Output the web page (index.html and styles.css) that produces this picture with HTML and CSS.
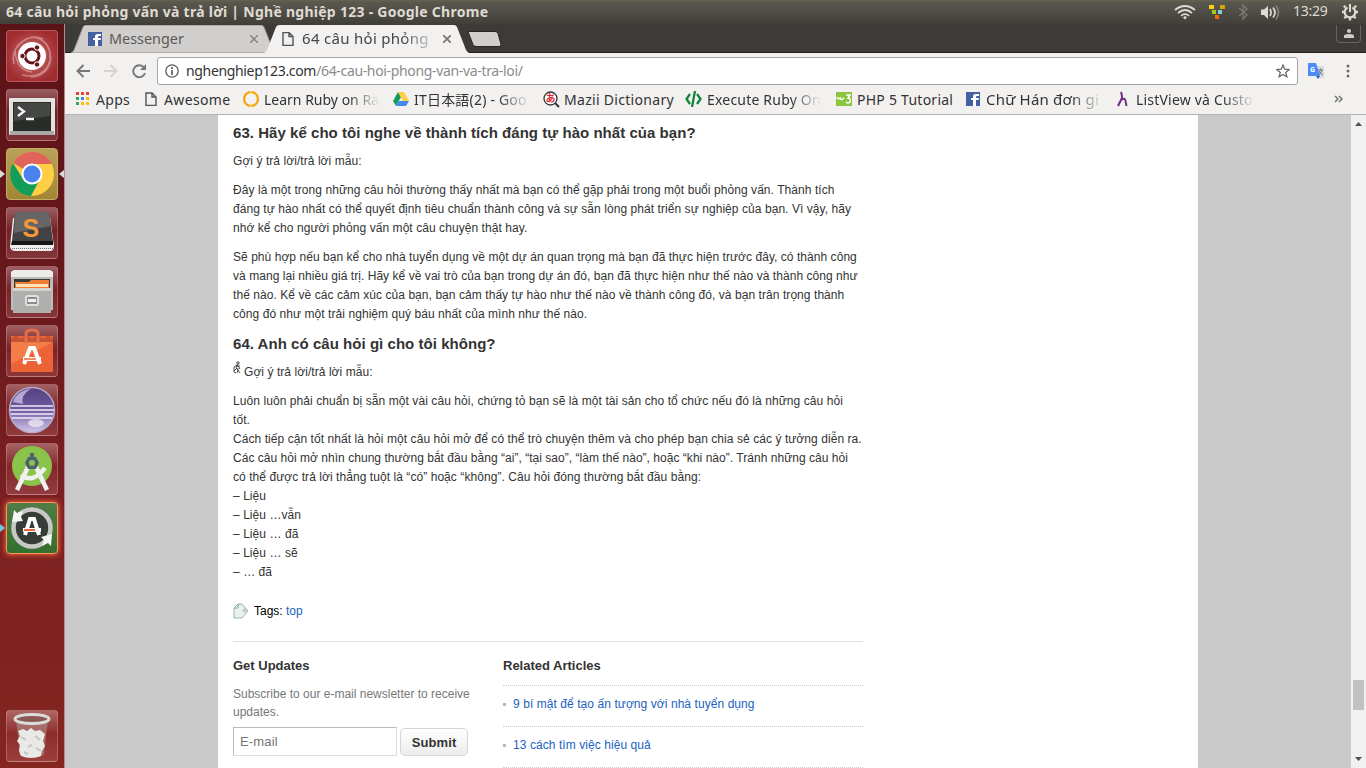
FILE: index.html
```html
<!DOCTYPE html>
<html lang="vi">
<head>
<meta charset="utf-8">
<title>64 câu hỏi phỏng vấn và trả lời | Nghề nghiệp 123</title>
<link rel="stylesheet" href="styles.css">
</head>
<body>
<div class="panel">
  <div class="panel-title">64 câu hỏi phỏng vấn và trả lời | Nghề nghiệp 123 - Google Chrome</div>
  <div class="indicators">
    <svg width="22" height="18" viewBox="0 0 22 18" fill="none" stroke="#dfdbd2" stroke-width="1.7"><path d="M1 7Q11-1 21 7M4 10Q11 4 18 10M7 12.800Q11 9.500 15 12.800"/><path d="M9 14.500l2-1.500 2 1.500-2 2z" fill="#dfdbd2" stroke="none"/></svg>
    <svg class="ind-blocks" width="17" height="18" viewBox="0 0 17 18"><path fill="#fcd116" d="M0 2h5v4H0z"/><path fill="#d4a500" d="M11 2h5v4h-5z"/><path fill="#a3cf10" d="M3 7h4v4H3z"/><path fill="#83c9de" d="M9 7h4v4H9z"/><path fill="#ff6200" d="M6 12h4v4H6z"/></svg>
    <svg class="ind-bt" width="10" height="18" viewBox="0 0 10 18" fill="none" stroke="#7c7a73" stroke-width="1.300"><path d="M1 5l8 7-4 4V2l4 4-8 7"/></svg>
    <svg class="ind-sound" width="21" height="18" viewBox="0 0 21 18"><path d="M1 6.500h3l4-3.500v13l-4-4H1z" fill="#dfdbd2"/><g fill="none" stroke="#dfdbd2" stroke-width="1.700"><path d="M10 6q2 4 0 7M13 4.500q4 5 0 10"/><path stroke="#817f78" d="M16 2.500q5 7 0 14"/></g></svg>
    <span class="clock">13:29</span>
    <svg class="ind-gear" width="18" height="18" viewBox="0 0 18 18" fill="none" stroke="#dfdbd2"><path stroke-width="2.200" d="M6.500 4.500A5.300 5.300 0 1 0 11.500 4.500"/><path stroke-width="2" d="M9 1v8"/><path stroke-width="2.300" d="M4.500 4.500L2.800 2.800M13.500 4.500l1.700-1.700M3.500 9H1M14.500 9H17M5 13.500l-1.700 1.700M13 13.500l1.700 1.700M9 15v2.500"/></svg>
  </div>
</div>
<div class="desktop">
  <nav class="launcher">
    <div class="tile tile-dash"><svg viewBox="0 0 52 52"><path d="M7 30C7 14 22 4 34 9q11 6 10 19M12 16Q24 3 37 9M44 24c3 14-8 23-19 23M26 42Q10 40 9 20M16 45q24 5 29-18M8 34q-3-12 6-20" fill="none" stroke="#f3c0c0" opacity=".5" stroke-width="1.500"/><circle cx="26" cy="26" r="14" fill="#fff"/><circle cx="26" cy="26" r="7" fill="none" stroke="#641418" stroke-width="3"/><g fill="#641418" stroke="#fff" stroke-width="1"><circle cx="16.500" cy="26" r="2.700"/><circle cx="31" cy="17.500" r="2.700"/><circle cx="31" cy="34.500" r="2.700"/></g></svg></div>
    <div class="tile"><svg viewBox="0 0 52 52"><rect x="3" y="9" width="46" height="37" rx="1" fill="#e3e3df"/><rect x="4" y="42" width="44" height="4" fill="#a9aaa6"/><rect x="7" y="13" width="38" height="29" fill="#292c29"/><path d="M8 14h36v13L8 32z" fill="#454745"/><path d="M12 18l6 4.500-6 4.500M20 30h8" fill="none" stroke="#f4f4f4" stroke-width="2.300"/></svg></div>
    <div class="tile tile-chrome running"><svg viewBox="0 0 52 52"><circle cx="26" cy="26" r="22" fill="#ffce43"/><path d="M26 26L7 15A22 22 0 0 1 46 16H26z" fill="#e0645c"/><path d="M7 15A22 22 0 0 0 25 48l9-17-8 5-9-5z" fill="#149c59"/><circle cx="26" cy="26" r="10.500" fill="#fff"/><circle cx="26" cy="26" r="8.500" fill="#4a83ed"/></svg></div>
    <div class="tile"><svg viewBox="0 0 52 52"><path d="M7 11L4 39q0 4 4 5h37q3-1 3-5L44 10z" fill="#eee"/><path d="M9 5h34l4 29H6z" fill="#424242"/><path d="M9 5h34l2 14-37 7z" fill="#666"/><path d="M6 34h41v4H5z" fill="#161616"/><path d="M6 41.500h41" stroke="#777" stroke-dasharray="1 1"/><text x="16.500" y="29.500" class="sublime">S</text></svg></div>
    <div class="tile"><svg viewBox="0 0 52 52"><path d="M5 6l3-2h36l3 2v38H5z" fill="#bdbdbb"/><path d="M5 6l3-2h36l3 2v5H5z" fill="#ececea"/><path d="M8 13h36v10H8z" fill="#393936"/><path d="M9 16h14l2-2h18v8H9z" fill="#f07d32"/><path d="M10 18h32v3H10z" fill="#ffe2b5"/><path d="M7 22h38v25H7z" fill="#aeb0ae"/><path d="M7 22h38v3H7z" fill="#d4d5d3"/><rect x="20" y="30" width="12" height="9" rx="1.500" fill="#8c8e8c" stroke="#e0e0df" stroke-width="2"/><path d="M22 33h8v3h-8z" fill="#eee"/></svg></div>
    <div class="tile"><svg viewBox="0 0 52 52"><path d="M5 11h42v36H5z" fill="#ed6336"/><path d="M5 14l5-4 5 4 5-4 6 4 6-4 5 4 5-4 5 4v4H5z" fill="#c65335"/><path d="M5 17h42L5 39z" fill="#f47d48"/><path d="M20 18V9q0-4 6-4t6 4v9" fill="none" stroke="#de6d48" stroke-width="3"/><path d="M18 39l6-16h4l6 16M17 34h18" fill="none" stroke="#fff" stroke-width="4"/><path d="M18 34h12" stroke="#ed6336" stroke-width="1.500"/></svg></div>
    <div class="tile"><svg viewBox="0 0 52 52"><defs><linearGradient id="eclipse-body" x2="0" y2="1"><stop stop-color="#524181"/><stop offset=".5" stop-color="#705b9f"/><stop offset="1" stop-color="#d3c8ea"/></linearGradient></defs><circle cx="26" cy="26" r="22.500" fill="url(#eclipse-body)" stroke="#b5abca" stroke-width="1.500"/><path d="M7 18a20 17 0 0 1 18-13Q14 11 17 20z" fill="#b5a8d5"/><path d="M5 22h42M4 26h44M5 30h42M6 34h40" stroke="#eeeaf6" stroke-width="1.300"/><ellipse cx="30" cy="39" rx="8" ry="4" fill="#fff" opacity=".6"/></svg></div>
    <div class="tile"><svg viewBox="0 0 52 52"><circle cx="26" cy="23" r="20" fill="#8ac34a"/><path d="M15 32q12 9 24-7M22 24L11 47M30 24l11 23" fill="none" stroke="#f0f0f0" stroke-width="4.500"/><path d="M22 14h8l3 6-3 6h-8l-3-6z" fill="#52606b"/><path d="M24 10h4v8h-4z" fill="#52606b"/><circle cx="26" cy="20" r="3" fill="#8ac34a"/></svg></div>
    <div class="tile tile-updater attention"><svg viewBox="0 0 52 52"><circle cx="26" cy="26" r="18.500" fill="#363c37" stroke="#c8c9c6" stroke-width="4.500"/><path d="M6 20l2-12 3 3 6-2-2 6 2 4zM46 32l-1 12-3-3-6 3 2-6-3-3z" fill="#f6f6f4"/><path d="M19 33l5-16h4l5 16M17 28h18" fill="none" stroke="#fff" stroke-width="4"/><path d="M18 28h11" stroke="#e95420" stroke-width="1.800"/></svg></div>
    <div class="tile tile-trash"><svg viewBox="0 0 52 52"><path d="M10 9l4 36q12 5 24 0l4-36z" fill="#b7a8a5" opacity=".45"/><path d="M12 21l5-2 4 2 4-3 4 3 5-1 5 4-2 7 2 5-3 5-1 5q-10 4-20 0l-2-5 1-6-3-4 3-5z" fill="#e9e9e7"/><path d="M15 27l5 3M22 37l4-2M29 26l5 4M30 38l5 3M18 42l4 2" fill="none" stroke="#c5c6c4" stroke-width="2"/><ellipse cx="26" cy="9" rx="17" ry="4.500" fill="#8a5754" stroke="#d9dbd9" stroke-width="3"/></svg></div>
  </nav>
  <main class="browser">
    <header class="tabstrip">
      <div class="tab"><svg class="tab-shape" width="207" height="28" viewBox="0 0 207 28"><path d="M0 28Q2 27 3 25L12 2q1-2 3-2h175q2 0 3 2l9 23q1 2 3 3z" fill="#d1cfce" stroke="#92908e" stroke-width="1"/></svg><svg class="favicon" width="14" height="14" viewBox="0 0 14 14"><path fill="#4460a0" d="M0 0h14v14H0z"/><path d="M7 14V8H5V6h2V4.500Q7 2 9.500 2H13v2h-2q-1 0-1 1v1h3l-.4 2H10v6z" fill="#fff"/></svg><span class="tab-title">Messenger</span><svg class="tab-close" width="8" height="8"><path d="M0 0l8 8M8 0L0 8" stroke="#858381" stroke-width="1.500"/></svg></div>
      <div class="tab tab-active"><svg class="tab-shape" width="207" height="28" viewBox="0 0 207 28"><path d="M0 28Q2 27 3 25L12 2q1-2 3-2h175q2 0 3 2l9 23q1 2 3 3z" fill="#f2f1f0"/></svg><svg class="favicon" width="14" height="14" viewBox="0 0 14 14"><path d="M2 .5h6l4 4v9H2zM8 .5v4h4" fill="none" stroke="#555" stroke-width="1.400"/></svg><span class="tab-title active-title">64 câu hỏi phỏng</span><svg class="tab-close" width="8" height="8"><path d="M0 0l8 8M8 0L0 8" stroke="#777573" stroke-width="1.700"/></svg></div>
      <svg class="new-tab" width="34" height="16"><path d="M1 .5h26q2 0 3 2l3 11q0 2-2 2H8q-2 0-3-2L.5 2Q0 .5 1 .5z" fill="#d1cfce" stroke="#262521"/></svg>
      <div class="user-button"><svg width="10" height="9" viewBox="0 0 10 9"><circle cx="5" cy="2" r="2" fill="#d0ceca"/><path d="M0 9V7q0-2 5-2t5 2v2z" fill="#d0ceca"/></svg></div>
    </header>
    <div class="toolbar">
      <svg class="nav-icon" width="14" height="14" viewBox="0 0 14 14" fill="none" stroke="#777" stroke-width="2"><path d="M14 7H1.500M7.500 1l-6 6 6 6"/></svg>
      <svg class="nav-icon" width="14" height="14" viewBox="0 0 14 14" fill="none" stroke="#d5d4d3" stroke-width="2"><path d="M0 7h12.500M6.500 1l6 6-6 6"/></svg>
      <svg class="nav-icon" width="14" height="14" viewBox="0 0 14 14"><path d="M12 3.500A6 6 0 1 0 13 9" fill="none" stroke="#777" stroke-width="1.900"/><path d="M14 0v6H8z" fill="#777"/></svg>
      <div class="omnibox"><svg width="14" height="14" viewBox="0 0 14 14" fill="none" stroke="#5b5b5b"><circle cx="7" cy="7" r="6.200" stroke-width="1.300"/><path stroke-width="1.700" d="M7 6v5M7 3v2"/></svg><span class="url"><span class="domain">nghenghiep123.com</span>/64-cau-hoi-phong-van-va-tra-loi/</span><svg class="star" width="14" height="14" viewBox="0 0 14 14"><path d="M7 1l1.700 4.200 4.500.3-3.500 2.900 1.200 4.400L7 10.400l-3.900 2.400 1.200-4.400L.8 5.500l4.500-.3z" fill="none" stroke="#6b6b6b" stroke-width="1.300"/></svg></div>
      <svg class="translate" width="17" height="16" viewBox="0 0 17 16"><path d="M6 3h10v12H9z" fill="#d9dcdf"/><path d="M8 13h4l-2 3z" fill="#3355c8"/><path d="M0 0h8l4 13H0z" fill="#4c8bf5"/><text x="2" y="9" class="translate-g">G</text><path d="M10 7h5M12.500 5.500V7M14 7q-1 4-4 5M11 8q1 3 4 4" fill="none" stroke="#667987"/></svg>
      <svg class="menu-dots" width="4" height="14" viewBox="0 0 4 14" fill="#6c6b69"><circle cx="2" cy="2" r="1.500"/><circle cx="2" cy="7" r="1.500"/><circle cx="2" cy="12" r="1.500"/></svg>
    </div>
    <div class="bookmarks">
      <div class="bookmark b-apps"><svg width="14" height="14"><path fill="#ea4335" d="M0 0h3v3H0zM5 0h3v3H5zM10 0h3v3h-3z"/><path fill="#34a853" d="M0 5h3v3H0zM0 10h3v3H0z"/><path fill="#4285f4" d="M5 5h3v3H5z"/><path fill="#fbbc05" d="M10 5h3v3h-3zM5 10h3v3H5zM10 10h3v3h-3z"/></svg><span>Apps</span></div>
      <div class="bookmark b-awesome"><svg width="12" height="14"><path d="M1 1h6l4 4v8.500H1zM7 1v4h4" fill="none" stroke="#555" stroke-width="1.400"/></svg><span>Awesome</span></div>
      <div class="bookmark b-ruby"><svg width="16" height="16" viewBox="0 0 16 16" fill="none" stroke="#f6a609" stroke-width="2.300"><path d="M7.500 1C-1 2-1 14 7.500 15M8.500 1c8.500 1 8.500 13 0 14"/></svg><span class="fade">Learn Ruby on Ra</span></div>
      <div class="bookmark b-it"><svg width="16" height="14"><path fill="#149c59" d="M5 0L0 9l3 5 5-9z"/><path fill="#ffcf40" d="M5 0h6l5 9h-6z"/><path fill="#4387f5" d="M6 9h10l-3 5H3z"/></svg><span class="fade">IT日本語(2) - Goo</span></div>
      <div class="bookmark b-mazii"><svg width="17" height="17" viewBox="0 0 17 17"><circle cx="7.500" cy="7.500" r="6.500" fill="#fff" stroke="#333" stroke-width="1.300"/><path d="M12 12l4 4" stroke="#333" stroke-width="2"/><text x="2.500" y="11" class="kana">あ</text></svg><span>Mazii Dictionary</span></div>
      <div class="bookmark b-exec"><svg width="17" height="16" viewBox="0 0 17 16" fill="none" stroke="#15843b" stroke-width="2.300"><path d="M5 3L1.500 8 5 13M12 3l3.500 5L12 13M10 0L7 16"/></svg><span class="fade">Execute Ruby On</span></div>
      <div class="bookmark b-php"><svg width="16" height="14" viewBox="0 0 16 14"><path fill="#8ac53e" d="M0 0h16v14H0z"/><path d="M1 5q1 3 3 1 1 3 4 0M10 3h4l-2 3q3 0 2 4-2 2-4 0" fill="none" stroke="#fff" stroke-width="1.500"/></svg><span>PHP 5 Tutorial</span></div>
      <div class="bookmark b-kanji"><svg width="14" height="14" viewBox="0 0 14 14"><path fill="#4460a0" d="M0 0h14v14H0z"/><path d="M7 14V8H5V6h2V4.500Q7 2 9.500 2H13v2h-2q-1 0-1 1v1h3l-.4 2H10v6z" fill="#fff"/></svg><span class="fade">Chữ Hán đơn gi</span></div>
      <div class="bookmark b-list"><svg width="11" height="16" viewBox="0 0 11 16" fill="none" stroke="#6c2e80"><path stroke-width="2" d="M4 1q1 2 1 6l-4 8"/><path stroke-width="1.900" d="M4 9q4-3 4.500 1l1 5"/></svg><span class="fade">ListView và Custo</span></div>
      <svg class="overflow" width="9" height="8" fill="none" stroke="#6b6a68" stroke-width="1.400"><path d="M1 1l3 3-3 3M5 1l3 3-3 3"/></svg>
    </div>
    <div class="viewport">
      <div class="page">
        <article class="content">
          <h3 class="question q63">63. Hãy kể cho tôi nghe về thành tích đáng tự hào nhất của bạn?</h3>
          <p>Gợi ý trả lời/trả lời mẫu:</p>
          <p>Đây là một trong những câu hỏi thường thấy nhất mà bạn có thể gặp phải trong một buổi phỏng vấn. Thành tích<br>đáng tự hào nhất có thể quyết định tiêu chuẩn thành công và sự sẵn lòng phát triển sự nghiệp của bạn. Vì vậy, hãy<br>nhớ kể cho người phỏng vấn một câu chuyện thật hay.</p>
          <p><span class="snug">Sẽ phù hợp nếu bạn kể cho nhà tuyển dụng về một dự án quan trọng mà bạn đã thực hiện trước đây, có thành công<br>và mang lại nhiều giá trị. Hãy kể về vai trò của bạn trong dự án đó, bạn đã thực hiện như thế nào và thành công như</span><br>thế nào. Kể về các cảm xúc của bạn, bạn cảm thấy tự hào như thế nào về thành công đó, và bạn trân trọng thành<br>công đó như một trải nghiệm quý báu nhất của mình như thế nào.</p>
          <h3 class="question">64. Anh có câu hỏi gì cho tôi không?</h3>
          <p><svg class="figure" width="8" height="14" viewBox="0 0 8 14" fill="none" stroke="#222" stroke-width=".8"><circle cx="5" cy="2" r="1.200"/><path d="M5 3L3 7l2 2-1 3M4 4L1 6v5l2 1M5 5l2 3M4 7l-3 3M5 9l2 3M3 5h4M4 8h2"/></svg>Gợi ý trả lời/trả lời mẫu:</p>
          <p><span class="loose">Luôn luôn phải chuẩn bị sẵn một vài câu hỏi, chứng tỏ bạn sẽ là một tài sản cho tổ chức nếu đó là những câu hỏi</span><br>tốt.<br>Cách tiếp cận tốt nhất là hỏi một câu hỏi mở để có thể trò chuyện thêm và cho phép bạn chia sẻ các ý tưởng diễn ra.<br><span class="tight">Các câu hỏi mở nhìn chung thường bắt đầu bằng “ai”, “tại sao”, “làm thế nào”, hoặc “khi nào”. Tránh những câu hỏi</span><br>có thể được trả lời thẳng tuột là “có” hoặc “không”. Câu hỏi đóng thường bắt đầu bằng:<br>– Liệu<br>– Liệu …vẫn<br>– Liệu … đã<br>– Liệu … sẽ<br>– … đã</p>
          <div class="tags"><svg width="16" height="16" viewBox="0 0 16 16"><path d="M1 5V15h8l6-7-6-7H5v3z" fill="#e7f1ef" stroke="#9ab1ae"/><path d="M1 5l4-4v4z" fill="#fff" stroke="#8ba5a2"/><circle cx="11.500" cy="7.500" r="1.200" fill="#fff" stroke="#8ba5a2"/></svg><span>Tags: <a>top</a></span></div>
          <section class="after-post">
            <div class="updates">
              <h4>Get Updates</h4>
              <p class="subscribe">Subscribe to our e-mail newsletter to receive<br>updates.</p>
              <form class="signup"><input type="text" placeholder="E-mail"><button type="button">Submit</button></form>
            </div>
            <div class="related">
              <h4>Related Articles</h4>
              <ul><li><a>9 bí mật để tạo ấn tượng với nhà tuyển dụng</a></li><li><a>13 cách tìm việc hiệu quả</a></li></ul>
            </div>
          </section>
        </article>
      </div>
      <div class="scrollbar"><svg width="7" height="4"><path d="M0 4l3.500-4L7 4z" fill="#505050"/></svg><div class="thumb"></div><svg width="7" height="4"><path d="M0 0l3.500 4L7 0z" fill="#505050"/></svg></div>
    </div>
  </main>
</div>
</body>
</html>
```
FILE: styles.css
```css
* { box-sizing: border-box; }
body { margin: 0; width: 1366px; height: 768px; overflow: hidden; font-family: "Noto Sans", "Noto Sans CJK JP", sans-serif; }
svg { flex: none; display: block; }
.panel { height: 24px; display: flex; align-items: center; justify-content: space-between; padding: 0 7px 0 6px; background: linear-gradient(#66634f 0, #5b5850 2px, #403f3a); color: #dfdbd2; }
.panel-title { font-weight: 700; font-size: 14px; white-space: nowrap; letter-spacing: .27px; line-height: 24px; }
.indicators { display: flex; align-items: center; }
.ind-blocks { margin-left: 13px; }
.ind-bt { margin-left: 12px; }
.ind-sound { margin-left: 12px; }
.clock { margin-left: 12px; width: 36px; font-size: 14px; line-height: 20px; padding-bottom: 2px; letter-spacing: -.25px; white-space: nowrap; }
.ind-gear { margin-left: 12px; }
.desktop { display: flex; height: 744px; }
.launcher { width: 65px; flex: none; display: flex; flex-direction: column; align-items: flex-start; gap: 7px; padding: 6px 0 6px 6px; border-right: 1px solid #bd8588; background: linear-gradient(#5c1317, #66171b 30%, #7b2022 65%, #84251f); }
.tile { position: relative; width: 52px; height: 52px; flex: none; border-radius: 4px; border: 1px solid rgba(255,220,220,.24); background: linear-gradient(rgba(255,225,230,.35), rgba(190,80,90,.18) 45%, rgba(225,150,155,.24)); }
.tile svg { width: 52px; height: 52px; margin: -1px; }
.tile-dash { background: radial-gradient(#cb7577, #a12d31 75%); }
.tile-chrome { background: linear-gradient(#bba158, #a38634); border-color: #c6ad67; }
.tile-updater { background: linear-gradient(#517c46, #34702e); }
.tile-trash { margin-top: auto; }
.running::before, .running::after, .attention::before { content: ""; position: absolute; top: 21px; border: 4px solid transparent; }
.running::before { left: -7px; border-left: 5px solid #ddd; border-right: 0; }
.running::after { right: -7px; border-right: 5px solid #ddd; border-left: 0; }
.attention { border-color: #fa9860; box-shadow: 0 0 5px 1px #ed6038; }
.attention::before { left: -7px; border-left: 5px solid #70c6e5; border-right: 0; }
.sublime { font: bold 25px "Liberation Sans", sans-serif; fill: #f3983a; }
.browser { flex: 1; min-width: 0; display: flex; flex-direction: column; background: #f2f1f0; }
.tabstrip { height: 29px; display: flex; align-items: flex-start; padding: 1px 5px 0 6px; background: #3c3b37; border-bottom: 1px solid #24231f; }
.tab { position: relative; width: 205px; height: 28px; margin-right: -12px; padding: 0 12px 0 17px; display: flex; align-items: center; color: #5b5957; }
.tab > *:not(.tab-shape) { position: relative; }
.tab-shape { position: absolute; left: 0; top: 0; }
.tab-title { margin-left: 7px; width: 130px; padding-bottom: 2px; font-size: 14.4px; white-space: nowrap; overflow: hidden; }
.tab-close { margin-left: auto; margin-right: 6px; }
.tab-active { z-index: 1; color: #454545; margin-right: -1px; }
.active-title { font-size: 15px; letter-spacing: .3px; -webkit-mask-image: linear-gradient(90deg, #000 100px, transparent 137px); }
.new-tab { margin-top: 6px; }
.user-button { margin-left: auto; width: 25px; height: 18px; display: flex; align-items: center; justify-content: center; border: 1px solid #65635d; border-top: 0; border-radius: 0 0 4px 4px; }
.toolbar { height: 33px; display: flex; align-items: center; padding: 4px 16px 1px 11px; }
.nav-icon { margin-right: 14px; }
.omnibox { width: 1141px; height: 28px; margin-left: -3px; display: flex; align-items: center; padding: 0 7px; background: #fff; border: 1px solid #a5a5a5; border-radius: 3px; }
.url { margin-left: 7px; padding-bottom: 2px; font-size: 14px; letter-spacing: -.34px; color: #8b8b8b; white-space: nowrap; }
.domain { color: #333; }
.star { margin-left: auto; }
.translate { margin-left: 10px; }
.translate-g { font: bold 7px "Open Sans", sans-serif; fill: #fff; }
.menu-dots { margin-left: auto; }
.bookmarks { height: 29px; display: flex; align-items: center; padding: 0 23px 2px 11px; border-bottom: 1px solid #b6b4b2; color: #333; font-size: 14px; }
.bookmark { display: flex; align-items: center; gap: 7px; white-space: nowrap; flex: none; overflow: hidden; }
.bookmark span { overflow: hidden; }
.fade { flex: 1; -webkit-mask-image: linear-gradient(90deg, #000 calc(100% - 32px), transparent); }
.b-apps { width: 69px; gap: 6px; letter-spacing: .3px; }
.b-awesome { width: 98px; letter-spacing: .35px; }
.b-ruby { width: 137px; margin-right: 13px; gap: 5px; }
.b-it { width: 137px; margin-right: 13px; gap: 5px; letter-spacing: .2px; }
.b-mazii { width: 142px; gap: 4px; letter-spacing: .3px; }
.b-exec { width: 137px; margin-right: 14px; gap: 5px; letter-spacing: .2px; }
.b-php { width: 130px; gap: 5px; letter-spacing: .25px; }
.b-kanji { width: 137px; margin-right: 14px; gap: 6px; font-size: 15px; letter-spacing: .2px; }
.b-list { width: 138px; gap: 8px; letter-spacing: .2px; }
.kana { font: bold 10px "Noto Sans CJK JP", sans-serif; fill: #d82c39; }
.overflow { margin-left: auto; }
.viewport { flex: 1; min-height: 0; display: flex; background: #c9c9c9; }
.page { width: 980px; margin-left: 153px; padding: 6px 15px 0; overflow: hidden; background: #fff; }
.content { width: 630px; font: 12px/19px "Liberation Sans", Arial, sans-serif; color: #333; }
.content p { margin: 0 0 10px; white-space: nowrap; letter-spacing: .063px; }
.content .snug { letter-spacing: .047px; }
.content .loose { letter-spacing: .08px; }
.content .tight { letter-spacing: .03px; }
.question { margin: 0; height: 31px; font-size: 15px; line-height: 24px; letter-spacing: .04px; white-space: nowrap; }
.content p + .question { margin-top: -2px; }
.figure { display: inline-block; margin: -5px 3px 0 0; vertical-align: 1px; height: 14px; }
.tags { display: flex; align-items: center; gap: 5px; height: 19px; margin-top: 20px; color: #000; }
.tags svg { margin-bottom: 1px; }
.content a { color: #1b62bf; }
.after-post { margin-top: 20px; border-top: 1px solid #e3e3e3; display: flex; padding-top: 14px; }
.updates { width: 270px; }
.related { flex: 1; letter-spacing: .07px; }
.after-post h4 { margin: 0; font-size: 13px; line-height: 19px; color: #333; letter-spacing: 0; }
.content .subscribe { margin: 10px 0 6px; line-height: 18px; color: #777; letter-spacing: 0; }
.signup { display: flex; align-items: flex-end; gap: 3px; }
.signup input { width: 164px; height: 29px; padding: 0 6px; border: 1px solid #ddd; border-top-color: #bbb; border-left-color: #bbb; font: 13px "Liberation Sans", sans-serif; letter-spacing: .15px; }
.signup input::placeholder { color: #757575; }
.signup button { width: 68px; height: 28px; padding: 0; border: 1px solid #d6d6d6; border-radius: 5px; background: linear-gradient(#fff, #ececec); color: #333; font: bold 13px "Liberation Sans", sans-serif; letter-spacing: .1px; }
.related ul { margin: 10px 0 0; padding: 0; list-style: none; }
.related li { height: 41px; border-top: 1px dotted #ccc; display: flex; align-items: center; gap: 7px; padding-bottom: 4px; }
.related li:last-child { height: 42px; border-bottom: 1px dotted #ccc; }
.related li::before { content: ""; width: 3px; height: 3px; background: #b8b8b8; }
.scrollbar { width: 15px; margin-left: auto; display: flex; flex-direction: column; align-items: center; padding: 7px 0; background: #f1f1f1; }
.thumb { width: 11px; height: 30px; margin-top: 554px; margin-bottom: auto; background: #c1c1c1; }
```
